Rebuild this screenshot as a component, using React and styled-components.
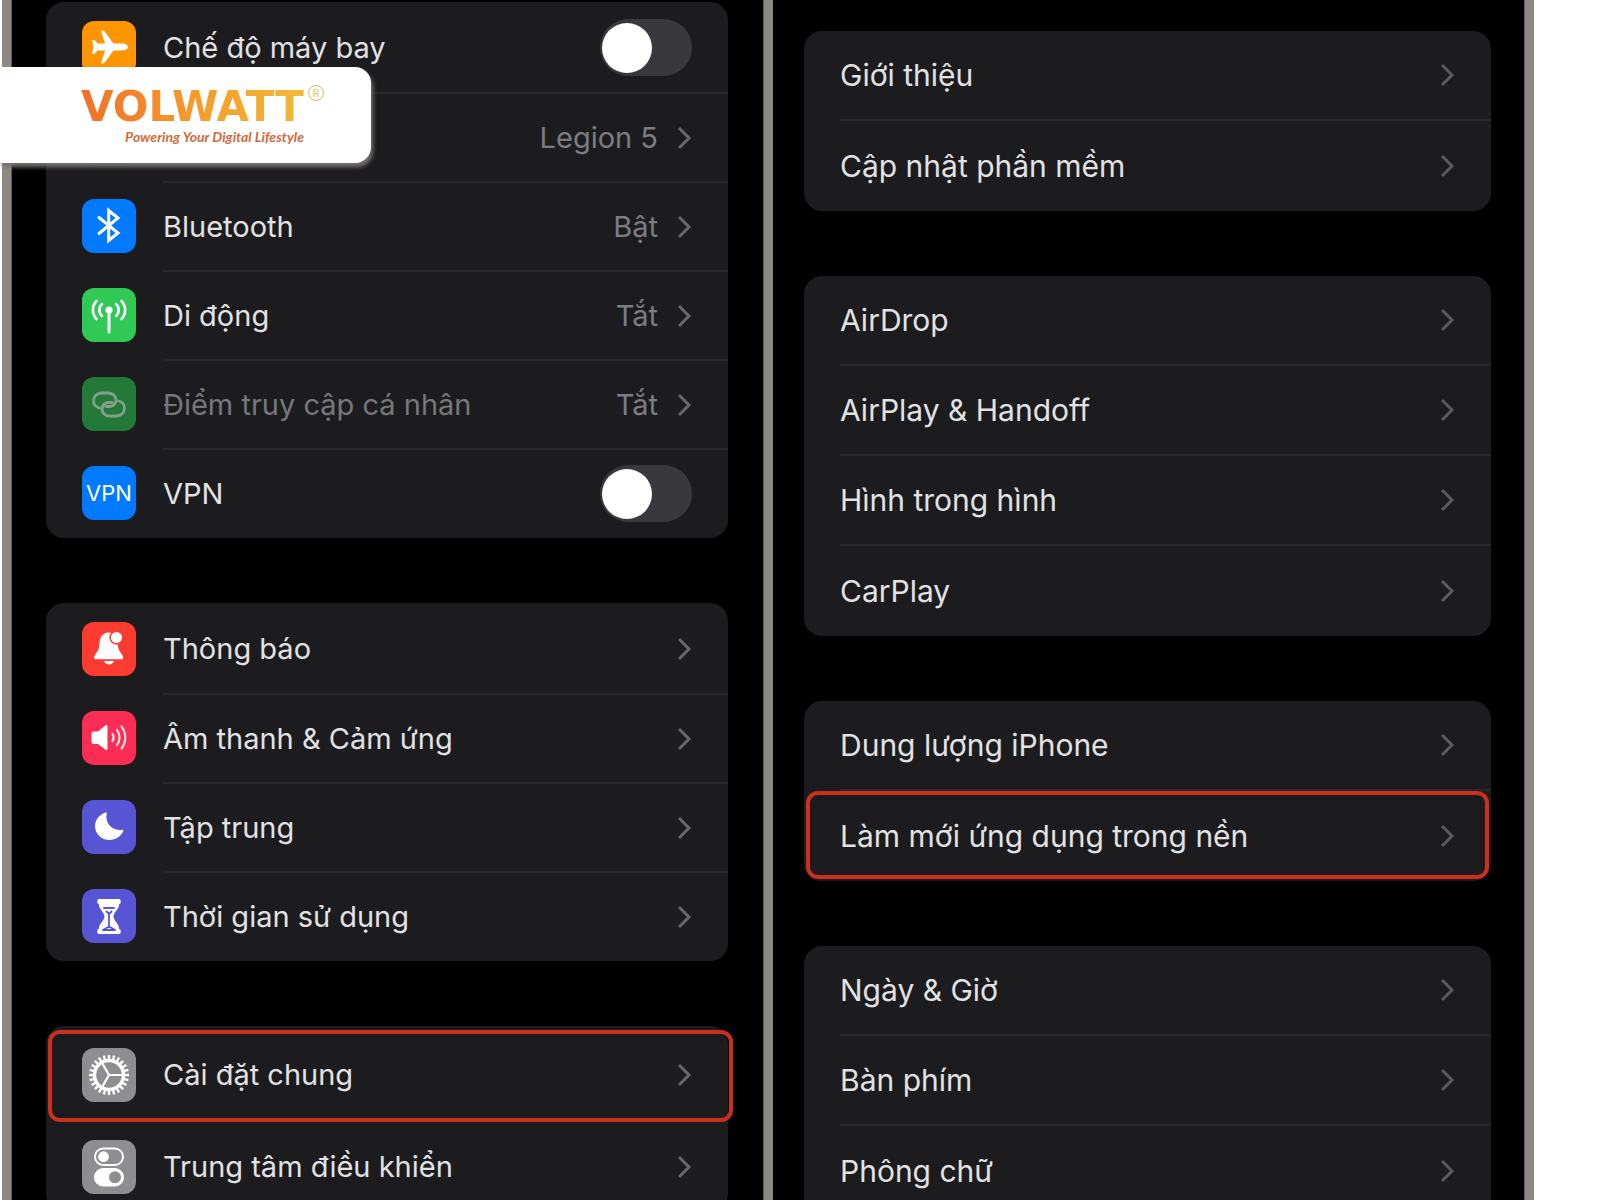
import React from 'react'
import styled, { createGlobalStyle } from 'styled-components'

const connectivity = [
  { icon: 'plane', color: '#ff9500', label: 'Chế độ máy bay', toggle: true },
  { icon: 'wifi', color: '#027aff', name: 'Wi-Fi', value: 'Legion 5' },
  { icon: 'bluetooth', color: '#027aff', label: 'Bluetooth', value: 'Bật' },
  { icon: 'antenna', color: '#30c955', label: 'Di động', value: 'Tắt' },
  { icon: 'hotspot', color: '#237a38', label: 'Điểm truy cập cá nhân', value: 'Tắt', disabled: true },
  { icon: 'vpn', color: '#027aff', label: 'VPN', toggle: true },
]

const alerts = [
  { icon: 'bell', color: '#fd3b30', label: 'Thông báo' },
  { icon: 'speaker', color: '#fc2d55', label: 'Âm thanh & Cảm ứng' },
  { icon: 'moon', color: '#5755d3', label: 'Tập trung' },
  { icon: 'hourglass', color: '#5755d3', label: 'Thời gian sử dụng' },
]

const general = [
  { icon: 'gear', color: '#8d8d92', label: 'Cài đặt chung', marked: true },
  { icon: 'switches', color: '#8d8d92', label: 'Trung tâm điều khiển' },
]

const detailGroups = [
  [{ label: 'Giới thiệu' }, { label: 'Cập nhật phần mềm' }],
  [{ label: 'AirDrop' }, { label: 'AirPlay & Handoff' }, { label: 'Hình trong hình' }, { label: 'CarPlay' }],
  [{ label: 'Dung lượng iPhone' }, { label: 'Làm mới ứng dụng trong nền', marked: true }],
  [{ label: 'Ngày & Giờ' }, { label: 'Bàn phím' }, { label: 'Phông chữ' }],
]

const teeth = Array.from({ length: 24 }, (_, i) => i * 15)

const icons = {
  plane: (
    <path
      fill="#fff"
      d="M46 26c0-2-3-3.400-6-3.400h-8.500L23 11q-1-1.400-2.500-1.400H19l4 13h-7.500L12.500 19H9.800l1.700 7-1.700 7h2.700l3-3.600H23l-4 13h1.500q1.500 0 2.500-1.400l8.500-11.600H40c3 0 6-1.400 6-3.400z"
    />
  ),
  wifi: (
    <g fill="none" stroke="#fff" strokeWidth="4">
      <path d="M10 23a24 24 0 0 1 34 0M17 30a14 14 0 0 1 20 0" />
      <circle cx="27" cy="37" r="2" fill="#fff" />
    </g>
  ),
  bluetooth: (
    <path d="M17 18.500 36 34l-9.300 7.500v-30L36 19 17 34.500" fill="none" stroke="#fff" strokeWidth="3" strokeLinejoin="miter" strokeLinecap="round" />
  ),
  antenna: (
    <g fill="none" stroke="#fff" strokeWidth="2.600" strokeLinecap="round">
      <circle cx="27" cy="22" r="3.600" fill="#fff" stroke="none" />
      <path d="M27 24v20" strokeWidth="3" />
      <path d="M20 16a8 8 0 0 0 0 12M34 16a8 8 0 0 1 0 12M14.500 13a13 13 0 0 0 0 18M39.500 13a13 13 0 0 1 0 18" />
    </g>
  ),
  hotspot: (
    <g fill="none" stroke="#86a08b" strokeWidth="2.800" strokeLinecap="round">
      <path d="M17.500 31c-3.800-1-6-3.600-6-7.200 0-4.600 3.500-7.800 8-7.800h6.500c4.500 0 8 2.800 8 6.800s-3 6.700-7 6.700h-3" />
      <path d="M36.500 24c3.800 1 6 3.600 6 7.200 0 4.600-3.500 7.800-8 7.800H28c-4.500 0-8-2.800-8-6.800s3-6.700 7-6.700h3" />
    </g>
  ),
  bell: (
    <g fill="#fff">
      <path d="M26.500 10.500c-6 0-9 5-9 11 0 8-5 10-5.500 14-.1 1 .6 1.700 1.600 1.700h26c1 0 1.700-.7 1.600-1.700-.5-4-5.600-6-5.600-14 0-6-3-11-9.100-11z" />
      <path d="M22 39h10c-.8 2.200-2.600 3.400-5 3.400s-4.200-1.200-5-3.400z" />
      <circle cx="34.500" cy="15.500" r="6.400" stroke="#fd3b30" strokeWidth="1.600" />
    </g>
  ),
  speaker: (
    <g>
      <path fill="#fff" d="M9.500 22.500q0-2 2-2H16l7.300-6q2.200-1.400 2.200 1.200v21.600q0 2.600-2.200 1.200L16 33h-4.500q-2 0-2-2z" />
      <path
        fill="none"
        stroke="#fff"
        strokeWidth="2.200"
        strokeLinecap="round"
        opacity=".85"
        d="M30.500 23a6.500 6.500 0 0 1 0 7M35 19a12.500 12.500 0 0 1 0 15M39.500 15.500a18 18 0 0 1 0 22"
      />
    </g>
  ),
  moon: <path fill="#fff" d="M23.500 12.500c.8-.4 1.400 0 1.200.8-2 9.700 5.300 18.200 15.600 16.500.9-.1 1.400.5 1 1.300C38.800 36.500 34 40 27.500 40 19.500 40 13 33.800 13 26c0-6 4-11.200 10.500-13.500z" />,
  hourglass: (
    <g>
      <path fill="#fff" d="M17 10h20q1.700 0 1.700 1.700v1.500q0 1.600-1.500 1.800C37 20.500 31.500 23.500 31.500 27.500S37 34.500 37.200 40q1.500.2 1.500 1.800v1.500Q38.700 45 37 45H17q-1.700 0-1.700-1.700v-1.500q0-1.600 1.500-1.800C17 34.500 22.500 31.500 22.500 27.500S17 20.500 16.800 15q-1.500-.2-1.500-1.800v-1.500Q15.300 10 17 10z" />
      <path fill="none" stroke="#5755d3" strokeWidth="1.800" strokeLinecap="round" strokeLinejoin="round" d="M22 19h10M24.500 22.500 27 25l2.500-2.500M27 25v13M27 37.500 21 41h12z" />
    </g>
  ),
  gear: (
    <g stroke="#fff" fill="none">
      {teeth.map(angle => (
        <path key={angle} d="M27 12V7" strokeWidth="2.400" transform={`rotate(${angle} 27 27)`} />
      ))}
      <circle cx="27" cy="27" r="14.500" strokeWidth="3.400" />
      <path d="M27 27h14M27 27l-7-12.100M27 27l-7 12.100" strokeWidth="2.200" />
    </g>
  ),
  switches: (
    <g>
      <rect x="13" y="8.500" width="28" height="16.500" rx="8.250" fill="none" stroke="#fff" strokeWidth="2" />
      <circle cx="21.500" cy="16.700" r="5.400" fill="#fff" />
      <rect x="12" y="28" width="30" height="18.500" rx="9.250" fill="#fff" />
      <circle cx="33" cy="37.200" r="6" fill="#8d8d92" />
    </g>
  ),
}

const SettingRow = ({ item, id }) => {
  const tile = item.icon && (
    <Tile $color={item.color} aria-hidden="true">
      {item.icon === 'vpn' ? 'VPN' : <svg viewBox="0 0 54 54">{icons[item.icon]}</svg>}
    </Tile>
  )

  return (
    <Row $marked={item.marked} $hasIcon={Boolean(item.icon)}>
      {tile}
      {item.toggle ? (
        <Content as="label" htmlFor={id}>
          <Label>{item.label}</Label>
          <Toggle type="checkbox" role="switch" id={id} />
        </Content>
      ) : (
        <Content href="#" $disabled={item.disabled} aria-label={item.name}>
          <Label>{item.label}</Label>
          {item.value && <Value>{item.value}</Value>}
          <Chevron viewBox="0 0 14 24" $dim={!item.icon} aria-hidden="true">
            <path d="M1 2l10 10L1 22" />
          </Chevron>
        </Content>
      )}
    </Row>
  )
}

const Group = ({ items, name }) => (
  <Card $hasIcon={Boolean(items[0].icon)}>
    {items.map((item, i) => (
      <SettingRow key={`${name}-${i}`} item={item} id={`${name}-${i}`} />
    ))}
  </Card>
)

const App = () => {
  return (
    <>
      <GlobalStyle />
      <Page>
        <Frame />
        <Phone $side="left">
          <Group items={connectivity} name="connectivity" />
          <Group items={alerts} name="alerts" />
          <Group items={general} name="general" />
        </Phone>
        <Frame />
        <Phone $side="right">
          {detailGroups.map((items, i) => (
            <Group key={i} items={items} name={`detail-${i}`} />
          ))}
        </Phone>
        <Frame />
        <Brand>
          <Wordmark>VOLWATT</Wordmark>
          <Registered>R</Registered>
          <Tagline>Powering Your Digital Lifestyle</Tagline>
        </Brand>
      </Page>
    </>
  )
}

const GlobalStyle = createGlobalStyle`
* {
  box-sizing: border-box;
}
body {
  margin: 0;
  background: #fff;
  font-family: Inter, "Noto Sans", sans-serif;
}
`

const Page = styled.main`
position: relative;
display: grid;
grid-template-columns: 10px minmax(0, 1fr) 10px minmax(0, 1fr) 10px;
height: 100vh;
overflow: hidden;
padding: 0 66px 0 2px;
`

const Frame = styled.div`
background: #8d8882;
border: solid #5f5b58;
border-width: 0 0 0 1px;

&:first-child {
  border-width: 0 1px 0 0;
}
`

const Phone = styled.section`
display: flex;
flex-direction: column;
gap: 65px;
background: #000;
padding: ${({ $side }) => ($side === 'left' ? '2px 35px 0 34px' : '31px 33px 0 31px')};
`

const Card = styled.ul`
flex: none;
list-style: none;
margin: 0;
padding: ${({ $hasIcon }) => ($hasIcon ? '1px 0' : '0')};
background: #1c1c1e;
border-radius: 18px;
`

const Content = styled.a`
flex: 1;
align-self: stretch;
display: flex;
align-items: center;
padding-right: 36px;
color: ${({ $disabled }) => ($disabled ? '#77777a' : '#e2e2e4')};
text-decoration: none;
`

const Row = styled.li`
position: relative;
display: flex;
align-items: center;
gap: 27px;
height: ${({ $hasIcon, $marked }) => ($hasIcon ? ($marked ? '95px' : '89px') : '90px')};
padding-left: 36px;
font-size: ${({ $hasIcon }) => ($hasIcon ? '29px' : '30px')};

& + & > ${Content} {
  border-top: ${({ $hasIcon }) => ($hasIcon ? '2px solid #28282a' : '0')};
}
&:not(:last-child) > ${Content} {
  border-bottom: ${({ $hasIcon }) => ($hasIcon ? '0' : '2px solid #28282a')};
}

&::after {
  content: ${({ $marked }) => ($marked ? "''" : 'none')};
  position: absolute;
  inset: ${({ $hasIcon }) => ($hasIcon ? '3px -5px 0 2px' : '0 2px 2px')};
  border: 4px solid #cc2f1e;
  border-radius: 12px;
  pointer-events: none;
}
`

const Tile = styled.span`
flex: none;
display: grid;
place-items: center;
width: 54px;
height: 54px;
border-radius: 12px;
background: ${({ $color }) => $color};
color: #fff;
font-size: 22px;

svg {
  width: 54px;
  height: 54px;
}
`

const Label = styled.span`
flex: 1;
line-height: 40px;
white-space: nowrap;
`

const Value = styled.span`
margin-right: 20px;
color: #7c7c81;
line-height: 40px;
`

const Chevron = styled.svg`
flex: none;
width: 14px;
height: 24px;
fill: none;
stroke: ${({ $dim }) => ($dim ? '#5a5a5d' : '#68686c')};
stroke-width: 3;
`

const Toggle = styled.input`
appearance: none;
display: flex;
align-items: center;
width: 92px;
height: 57px;
margin: 0;
padding: 0 2px;
border-radius: 29px;
background: #39383d;

&::before {
  content: '';
  width: 50px;
  height: 50px;
  border-radius: 50%;
  background: #fff;
}
&:checked {
  justify-content: flex-end;
  background: #30c955;
}
`

const Brand = styled.header`
position: absolute;
top: 67px;
left: 0;
display: grid;
grid-template-columns: 1fr auto;
column-gap: 4px;
align-content: center;
width: 371px;
height: 96px;
padding: 0 47px 0 28px;
border-radius: 0 16px 16px 0;
background: #fff;
box-shadow: 2px 4px 4px #777371;
`

const Wordmark = styled.strong`
justify-self: end;
font-family: "DejaVu Sans", sans-serif;
font-size: 42px;
line-height: 44px;
background: linear-gradient(90deg, #f0702a, #f59a2b 50%, #f3b936);
background-clip: text;
color: transparent;
`

const Registered = styled.span`
display: grid;
place-items: center;
width: 16px;
height: 16px;
border: 1px solid #dcb95c;
border-radius: 50%;
color: #dcb95c;
font-size: 10px;
line-height: 12px;
`

const Tagline = styled.span`
justify-self: end;
color: #d4693a;
font-family: Lato, sans-serif;
font-size: 14px;
font-style: italic;
font-weight: 700;
line-height: 16px;
white-space: nowrap;
`

export default App
